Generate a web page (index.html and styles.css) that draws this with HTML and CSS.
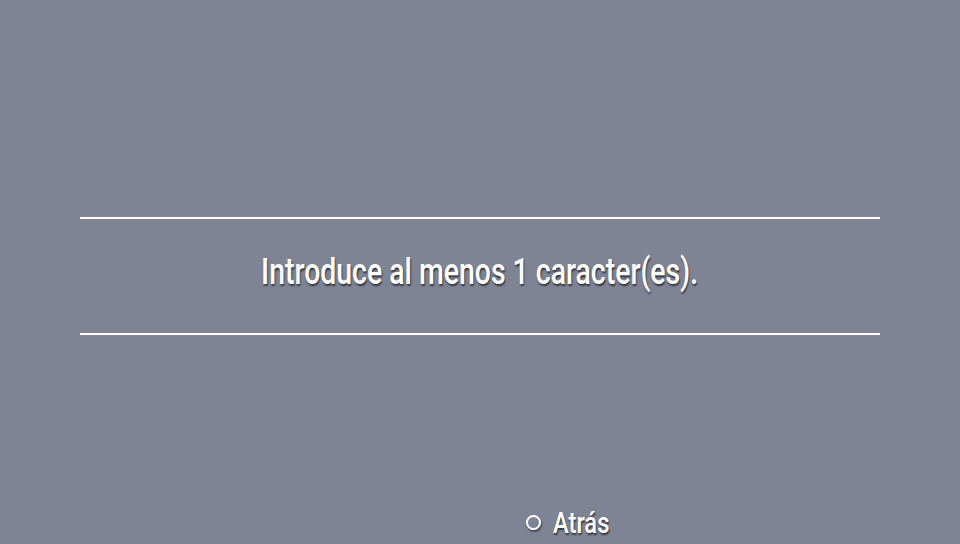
FILE: index.html
```html
<!DOCTYPE html>
<html>
<head>
<meta charset="utf-8">
<link rel="stylesheet" href="styles.css">
</head>
<body>
<div class="screen">
  <div class="top-space"></div>
  <div class="dialog">
    <div class="rule"></div>
    <div class="message"><span class="cond">Introduce al menos 1 caracter(es).</span></div>
    <div class="rule"></div>
  </div>
  <div class="footer">
    <span class="btn-circle"></span><span class="cond back">Atrás</span>
  </div>
</div>
</body>
</html>
```
FILE: styles.css
```css
html, body {
  margin: 0;
  padding: 0;
  background: #7f8494;
}
.screen {
  width: 960px;
  height: 544px;
  display: flex;
  flex-direction: column;
  font-family: Roboto, "Liberation Sans", sans-serif;
  color: #ffffff;
  overflow: hidden;
}
.top-space {
  height: 217px;
}
.dialog {
  margin: 0 80px;
  display: flex;
  flex-direction: column;
}
.rule {
  height: 2px;
  background: #ffffff;
}
.message {
  height: 114px;
  display: flex;
  align-items: center;
  justify-content: center;
}
.cond {
  display: inline-block;
  font-weight: 500;
  transform: scaleX(0.79);
  text-shadow: 1px 2px 2px rgba(0,0,0,0.6);
}
.message .cond {
  font-size: 36px;
  white-space: nowrap;
  margin-top: -9px;
}
.footer {
  margin-top: 171px;
  display: flex;
  align-items: center;
  padding-left: 526px;
  height: 32px;
}
.btn-circle {
  width: 11px;
  height: 11px;
  border: 2px solid #ffffff;
  border-radius: 50%;
  box-shadow: 1px 2px 2px rgba(0,0,0,0.45);
}
.back {
  font-size: 30px;
  transform-origin: left center;
  margin-left: 12px;
}
```
